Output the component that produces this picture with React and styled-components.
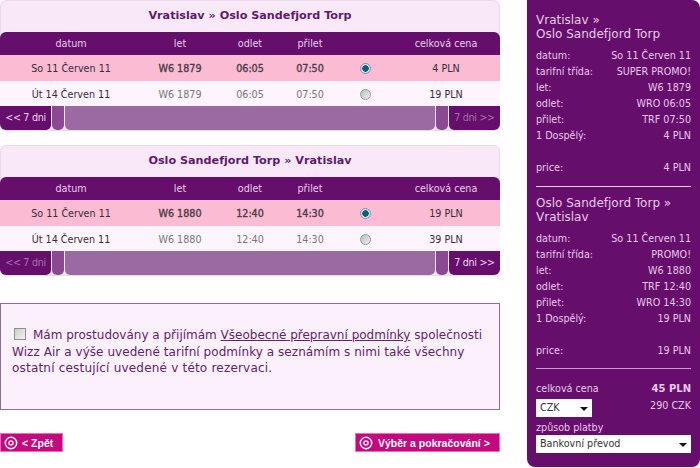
import React from "react";
import styled, { createGlobalStyle } from "styled-components";

const flights = [
  {
    title: "Vratislav » Oslo Sandefjord Torp",
    number: "W6 1879",
    dep: "06:05",
    arr: "07:50",
    rows: [
      { date: "So 11 Červen 11", price: "4 PLN", selected: true },
      { date: "Út 14 Červen 11", price: "19 PLN" },
    ],
    prevMuted: false,
    nextMuted: true,
  },
  {
    title: "Oslo Sandefjord Torp » Vratislav",
    number: "W6 1880",
    dep: "12:40",
    arr: "14:30",
    rows: [
      { date: "So 11 Červen 11", price: "19 PLN", selected: true },
      { date: "Út 14 Červen 11", price: "39 PLN" },
    ],
    prevMuted: true,
    nextMuted: false,
  },
];

const summaries = [
  {
    title: ["Vratislav »", "Oslo Sandefjord Torp"],
    rows: [
      ["datum:", "So 11 Červen 11"],
      ["tarifní třída:", "SUPER PROMO!"],
      ["let:", "W6 1879"],
      ["odlet:", "WRO 06:05"],
      ["přilet:", "TRF 07:50"],
      ["1 Dospělý:", "4 PLN"],
    ],
    price: "4 PLN",
  },
  {
    title: ["Oslo Sandefjord Torp »", "Vratislav"],
    rows: [
      ["datum:", "So 11 Červen 11"],
      ["tarifní třída:", "PROMO!"],
      ["let:", "W6 1880"],
      ["odlet:", "TRF 12:40"],
      ["přilet:", "WRO 14:30"],
      ["1 Dospělý:", "19 PLN"],
    ],
    price: "19 PLN",
  },
];

const CircleIcon = () => (
  <svg width="14" height="14" viewBox="0 0 14 14">
    <circle cx="7" cy="7" r="5.7" fill="none" stroke="#fff" strokeWidth="1.5" />
    <circle cx="7" cy="7" r="2.8" fill="#f6d9ec" />
    <circle cx="7" cy="7" r="1.3" fill="#c4087f" />
  </svg>
);

const App = () => {
  return (
    <>
      <GlobalStyle />
      <Page>
        <Main>
          {flights.map((flight) => (
            <FlightCard key={flight.title}>
              <CardTitle>{flight.title}</CardTitle>
              <HeadRow>
                <span>datum</span>
                <span>let</span>
                <span>odlet</span>
                <span>přilet</span>
                <span />
                <span>celková cena</span>
              </HeadRow>
              {flight.rows.map((row) => (
                <FlightRow key={row.date} $selected={row.selected}>
                  <span>{row.date}</span>
                  <MutedCell $selected={row.selected}>{flight.number}</MutedCell>
                  <MutedCell $selected={row.selected}>{flight.dep}</MutedCell>
                  <MutedCell $selected={row.selected}>{flight.arr}</MutedCell>
                  <RadioCell>
                    <Radio $selected={row.selected} />
                  </RadioCell>
                  <span>{row.price}</span>
                </FlightRow>
              ))}
              <PagerRow>
                <PagerEnd $muted={flight.prevMuted} $side="left">&lt;&lt; 7 dni</PagerEnd>
                <PagerStub />
                <PagerFill />
                <PagerStub />
                <PagerEnd $muted={flight.nextMuted} $side="right">7 dni &gt;&gt;</PagerEnd>
              </PagerRow>
            </FlightCard>
          ))}
          <TermsBox>
            <TermsLine>
              <TermsCheck />
              <span>Mám prostudovány a přijímám </span>
              <TermsLink>Všeobecné přepravní podmínky</TermsLink>
              <span> společnosti</span>
            </TermsLine>
            <TermsLine $tracking="0.06px">Wizz Air a výše uvedené tarifní podmínky a seznámím s nimi také všechny</TermsLine>
            <TermsLine $tracking="0.2px">ostatní cestující uvedené v této rezervaci.</TermsLine>
          </TermsBox>
          <Actions>
            <ActionButton><CircleIcon />&lt; Zpět</ActionButton>
            <ActionButton $wide><CircleIcon />Výběr a pokračování &gt;</ActionButton>
          </Actions>
        </Main>
        <Sidebar>
          {summaries.map((summary) => (
            <Summary key={summary.title[0]}>
              <SummaryTitle>
                {summary.title[0]}
                <br />
                {summary.title[1]}
              </SummaryTitle>
              {summary.rows.map(([label, value]) => (
                <SummaryRow key={label}>
                  <span>{label}</span>
                  <span>{value}</span>
                </SummaryRow>
              ))}
              <PriceRow>
                <span>price:</span>
                <span>{summary.price}</span>
              </PriceRow>
            </Summary>
          ))}
          <TotalRow>
            <span>celková cena</span>
            <strong>45 PLN</strong>
          </TotalRow>
          <CurrencyRow>
            <SelectBox $width="56px">
              CZK
              <Caret />
            </SelectBox>
            <span>290 CZK</span>
          </CurrencyRow>
          <PayLabel>způsob platby</PayLabel>
          <SelectBox>
            Bankovní převod
            <Caret />
          </SelectBox>
        </Sidebar>
      </Page>
    </>
  );
};

// Styled components
const GlobalStyle = createGlobalStyle`
  html, body {
    margin: 0;
    padding: 0;
    background: #fff;
  }
  body {
    font-family: "DejaVu Sans", Verdana, sans-serif;
    overflow: hidden;
  }
`;

const Page = styled.div`
  width: 700px;
  height: 468px;
  display: flex;
  justify-content: space-between;
  overflow: hidden;
`;

const Main = styled.div`
  width: 500px;
  display: flex;
  flex-direction: column;
`;

const FlightCard = styled.section`
  height: 131px;
  margin-bottom: 14px;
  background: #f9e9f8;
  border-radius: 7px;
  box-shadow: inset 0 0 0 1px #e9dbe8;
`;

const CardTitle = styled.h2`
  height: 32px;
  margin: 0;
  font-size: 11.2px;
  line-height: 31px;
  font-weight: bold;
  text-align: center;
  color: #5f1b6b;
`;

const columns = "142px 76px 64px 56px 54px 108px";

const HeadRow = styled.div`
  display: grid;
  grid-template-columns: ${columns};
  height: 23px;
  align-items: center;
  text-align: center;
  background: #660e6c;
  border-radius: 6px 6px 0 0;
  color: #eacdea;
  font-size: 9.6px;
`;

const FlightRow = styled.div`
  display: grid;
  grid-template-columns: ${columns};
  box-sizing: border-box;
  height: ${(p) => (p.$selected ? "26px" : "25px")};
  padding-top: 1px;
  align-items: center;
  text-align: center;
  font-size: 9.6px;
  background: ${(p) => (p.$selected ? "#fbbcd3" : "#fdf4fd")};
  color: #3a2a3a;
`;

const MutedCell = styled.span`
  color: ${(p) => (p.$selected ? "#4a3a4a" : "#777")};
  -webkit-text-stroke: ${(p) => (p.$selected ? "0.35px" : "0")};
`;

const RadioCell = styled.span`
  display: flex;
  justify-content: center;
`;

const Radio = styled.span`
  width: 11px;
  height: 11px;
  border-radius: 50%;
  box-sizing: border-box;
  border: 1px solid ${(p) => (p.$selected ? "#7b93a8" : "#9a9a9a")};
  background: ${(p) =>
    p.$selected
      ? "radial-gradient(circle, #0e5f74 0 3px, #d8e6ee 3.5px)"
      : "linear-gradient(135deg, #bbb, #f1f1f1)"};
`;

const PagerRow = styled.div`
  display: flex;
  height: 24px;
  gap: 1px;
`;

const PagerEnd = styled.div`
  width: 51px;
  flex: none;
  background: #660e6c;
  color: ${(p) => (p.$muted ? "#a573a8" : "#f0d8f0")};
  font-size: 9.6px;
  letter-spacing: -0.3px;
  line-height: 23px;
  text-align: center;
  white-space: nowrap;
  border-radius: ${(p) => (p.$side === "left" ? "0 0 5px 6px" : "0 0 6px 5px")};
`;

const PagerStub = styled.div`
  width: 12px;
  flex: none;
  background: #8a4a92;
  border-radius: 0 0 5px 5px;
`;

const PagerFill = styled.div`
  flex: 1;
  background: #9b6aa3;
  border-radius: 0 0 5px 5px;
`;

const TermsBox = styled.div`
  height: 107px;
  box-sizing: border-box;
  margin-top: 13px;
  padding: 23px 4px 0 11px;
  background: #fdf0fd;
  border: 1px solid #8c6f8e;
  color: #5f2468;
  font-size: 12px;
  line-height: 16.5px;
`;

const TermsLine = styled.div`
  white-space: pre;
  letter-spacing: ${(p) => p.$tracking || "normal"};
`;

const TermsCheck = styled.span`
  display: inline-block;
  box-sizing: border-box;
  width: 12px;
  height: 12px;
  margin: 0 7px 0 2px;
  vertical-align: -1px;
  border: 1px solid #8f8f8f;
  background: linear-gradient(135deg, #ccc, #f4f4f4);
`;

const TermsLink = styled.span`
  text-decoration: underline;
`;

const Actions = styled.div`
  display: flex;
  justify-content: space-between;
  margin-top: 23px;
`;

const ActionButton = styled.div`
  display: flex;
  align-items: center;
  gap: ${(p) => (p.$wide ? "5px" : "4px")};
  box-sizing: border-box;
  width: ${(p) => (p.$wide ? "145px" : "63px")};
  height: 19px;
  padding-left: 3px;
  background: #c4087f;
  border: 1px solid #ee6dbb;
  color: #fff;
  font-family: "Liberation Sans", Arial, sans-serif;
  font-size: 10.5px;
  font-weight: bold;
  white-space: nowrap;
`;

const Sidebar = styled.aside`
  width: 173px;
  height: 467px;
  box-sizing: border-box;
  padding: 13px 9px 0;
  background: #660e6c;
  border-radius: 0 8px 8px 8px;
  color: #e6cbe8;
  font-size: 9.6px;
`;

const Summary = styled.div`
  height: 173px;
  margin-bottom: 9px;
  border-bottom: 1px solid #e6cbe8;
  &:nth-child(2) {
    height: 172px;
    margin-bottom: 0;
    border-color: #c79ccb;
  }
`;

const SummaryTitle = styled.div`
  font-size: 12px;
  line-height: 14px;
  margin-bottom: 7px;
`;

const SummaryRow = styled.div`
  display: flex;
  justify-content: space-between;
  height: 16px;
  line-height: 16px;
  white-space: nowrap;
`;

const PriceRow = styled(SummaryRow)`
  margin-top: 16px;
`;

const TotalRow = styled.div`
  display: flex;
  justify-content: space-between;
  margin-top: 13px;
  height: 14px;
  line-height: 14px;
  strong {
    font-size: 10px;
  }
`;

const CurrencyRow = styled.div`
  display: flex;
  justify-content: space-between;
  align-items: flex-start;
  margin-top: 3px;
  span {
    line-height: 13px;
  }
`;

const SelectBox = styled.div`
  position: relative;
  box-sizing: border-box;
  width: ${(p) => p.$width || "100%"};
  height: 18px;
  padding-left: 4px;
  background: #fff;
  color: #333;
  line-height: 18px;
`;

const Caret = styled.i`
  position: absolute;
  right: 4px;
  top: 8px;
  border: 4px solid transparent;
  border-bottom: 0;
  border-top-color: #111;
`;

const PayLabel = styled.div`
  margin-top: 3px;
  height: 15px;
  line-height: 15px;
`;

export default App;
